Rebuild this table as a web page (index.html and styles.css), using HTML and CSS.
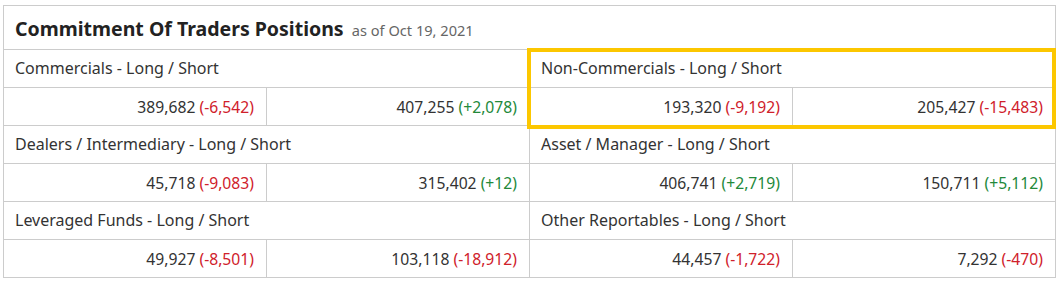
FILE: index.html
```html
<!DOCTYPE html>
<html>
<head>
<meta charset="utf-8">
<link rel="stylesheet" href="styles.css">
</head>
<body>
<div class="cot">
  <div class="cot-title"><span class="cot-name">Commitment Of Traders Positions</span> <span class="cot-date">as of Oct 19, 2021</span></div>
  <div class="cot-grid">
    <div class="group">
      <div class="label">Commercials - Long / Short</div>
      <div class="val">389,682 <span class="neg">(-6,542)</span></div>
      <div class="val">407,255 <span class="pos">(+2,078)</span></div>
    </div>
    <div class="group highlighted">
      <div class="label">Non-Commercials - Long / Short</div>
      <div class="val">193,320 <span class="neg">(-9,192)</span></div>
      <div class="val">205,427 <span class="neg">(-15,483)</span></div>
      <div class="hl"></div>
    </div>
    <div class="group">
      <div class="label">Dealers / Intermediary - Long / Short</div>
      <div class="val">45,718 <span class="neg">(-9,083)</span></div>
      <div class="val">315,402 <span class="pos">(+12)</span></div>
    </div>
    <div class="group">
      <div class="label">Asset / Manager - Long / Short</div>
      <div class="val">406,741 <span class="pos">(+2,719)</span></div>
      <div class="val">150,711 <span class="pos">(+5,112)</span></div>
    </div>
    <div class="group">
      <div class="label">Leveraged Funds - Long / Short</div>
      <div class="val">49,927 <span class="neg">(-8,501)</span></div>
      <div class="val">103,118 <span class="neg">(-18,912)</span></div>
    </div>
    <div class="group">
      <div class="label">Other Reportables - Long / Short</div>
      <div class="val">44,457 <span class="neg">(-1,722)</span></div>
      <div class="val">7,292 <span class="neg">(-470)</span></div>
    </div>
  </div>
</div>
</body>
</html>
```

FILE: styles.css
```css
body {
  margin: 0;
  background: #fff;
  font-family: "Noto Sans", "Open Sans", Arial, sans-serif;
  color: #333;
}
.cot {
  margin: 5px 3px 0 3px;
  border: 1px solid #ccc;
  background: #fff;
}
.cot-title {
  height: 44px;
  box-sizing: border-box;
  padding: 9px 11px 0 11px;
  border-bottom: 1px solid #ccc;
  white-space: nowrap;
}
.cot-name {
  font-size: 19.5px;
  font-weight: 700;
  color: #222;
}
.cot-date {
  font-size: 14.6px;
  color: #666;
  margin-left: 4px;
}
.cot-grid {
  display: grid;
  grid-template-columns: 1fr 1fr;
  gap: 1px;
  background: #ccc;
}
.group {
  display: grid;
  grid-template-columns: 1fr 1fr;
  gap: 1px;
  background: #ccc;
  position: relative;
}
.label {
  grid-column: 1 / 3;
  background: #fff;
  height: 37px;
  line-height: 36px;
  padding: 0 11px;
  font-size: 16px;
  color: #333;
}
.val {
  background: #fff;
  height: 37px;
  line-height: 38px;
  padding: 0 12px;
  text-align: right;
  font-size: 15.7px;
  color: #333;
}
.neg { color: #d0212b; }
.pos { color: #23893a; }
.hl {
  position: absolute;
  z-index: 2;
  top: -2px;
  left: -3px;
  right: -1px;
  bottom: -4px;
  border: 4px solid #fcc700;
  pointer-events: none;
}
```
